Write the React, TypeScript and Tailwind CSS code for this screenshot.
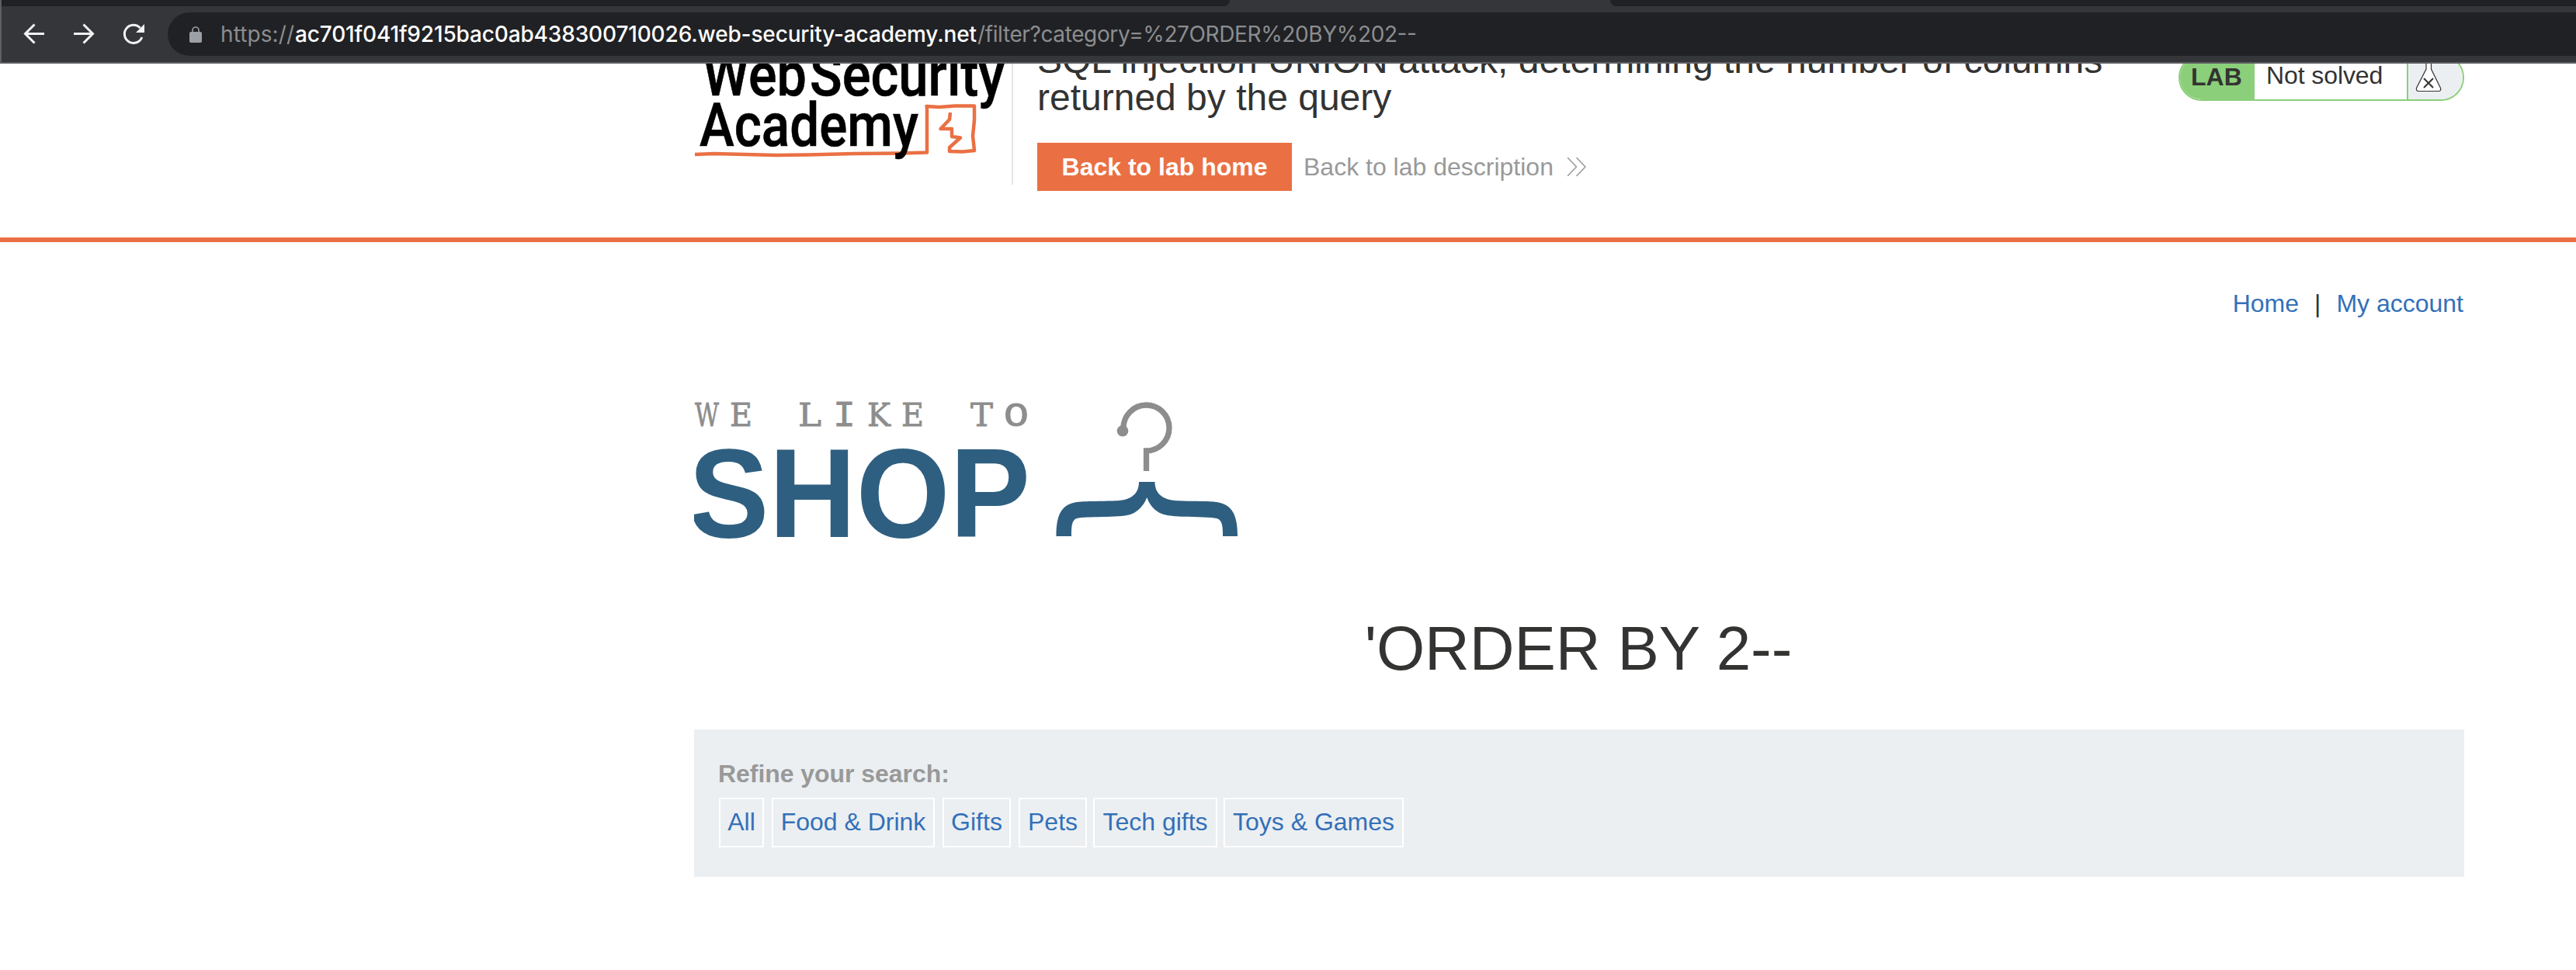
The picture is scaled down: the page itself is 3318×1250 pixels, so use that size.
import React from 'react';

const ARIAL = "font-['Liberation_Sans',Arial,sans-serif]";

function BrowserBar() {
  return (
    <header className="h-[82px] w-full bg-[#35363a] border-b-2 border-[#5f5e63] border-l-2 shrink-0 flex flex-col">
      <div className="flex h-2 justify-between">
        <div className="h-2 w-[1582px] bg-[#202124] rounded-br-lg" />
        <div className="h-2 w-[1244px] bg-[#202124] rounded-bl-lg" />
      </div>
      <div className="mt-2 flex h-14 items-center">
        <svg className="h-14 w-[214px]" viewBox="2 16 214 56" fill="none" stroke="#f1f3f4" strokeWidth="3">
          <path d="M57 43.5H32.500M44.500 31.5L32.500 43.5L44.500 55.5" />
          <path d="M95 43.5H119.500M107.500 31.5L119.500 43.5L107.500 55.5" />
          <path d="M182.800 48A11.600 11.600 0 1 1 180.500 36" />
          <path d="M186 31V42H175Z" fill="#f1f3f4" stroke="none" />
        </svg>
        <div className="flex h-14 flex-1 items-center rounded-l-full bg-[#202124] pl-7">
          <svg className="h-7 w-4 shrink-0" viewBox="0 0 16 28">
            <rect x="0" y="11" width="16" height="14" rx="2" fill="#9aa0a6" />
            <path d="M4 12V9a4 4 0 0 1 8 0V12" fill="none" stroke="#9aa0a6" strokeWidth="1.600" />
          </svg>
          <svg className="ml-[25px] h-14 w-[1560px]" viewBox="285 16 1560 56" fontFamily="Inter, sans-serif" fontSize="28">
            <text x="284" y="54" textLength="95" fill="#8c8d90">https://</text>
            <text x="380" y="54" textLength="878" fill="#ffffff" fontWeight="500">ac701f041f9215bac0ab438300710026.web-security-academy.net</text>
            <text x="1259" y="54" textLength="566" fill="#8c8d90">/filter?category=%27ORDER%20BY%202--</text>
          </svg>
        </div>
      </div>
    </header>
  );
}

function AcademyLogo() {
  return (
    <svg className="block h-[156px] w-[409px] shrink-0" viewBox="894 82 409 156">
      <path d="M895 199L920 198L1000 200L1040 199.500L1100 198L1160 197.500L1194 196.500V139L1193.500 137L1210 138L1230 136.500L1255 136.500L1255 155L1253 175L1255 194L1240 195.500L1223 195L1223 190L1237 177.500L1226 176V166H1211.500L1223 154L1224 145" fill="none" stroke="#ea7044" strokeWidth="4.500" strokeLinejoin="round" />
      <g fontFamily="Roboto, sans-serif" fontWeight="500" fontSize="77" fill="#000" stroke="#000" strokeWidth="0.600">
        <text x="905" y="123" textLength="134" lengthAdjust="spacingAndGlyphs">Web</text>
        <text x="1043" y="123" textLength="251" lengthAdjust="spacingAndGlyphs">Security</text>
        <text x="901" y="188" textLength="282" lengthAdjust="spacingAndGlyphs">Academy</text>
      </g>
    </svg>
  );
}

function LabStatus() {
  return (
    <div className="-mt-3 flex h-[60px] w-[368px] overflow-hidden rounded-[30px] border-2 border-[#8bcf7a] text-[32px] leading-[37px] text-[#333332]">
      <div className="w-24 bg-[#8bcf7a] pl-[14px] pt-[9px] font-bold">LAB</div>
      <div className="w-[196px] pl-[15px] pt-[7px] tracking-[-0.1px]">Not solved</div>
      <div className="flex-1 border-l-2 border-[#8bcf7a] bg-[#ebeff2]">
        <svg className="h-14 w-[70px]" viewBox="3102 72 70 56">
          <path d="M3125 78V89L3112.500 113.500Q3112 117.500 3115 117.500H3141Q3144.500 117.500 3143.500 113.500L3131.500 89V78" fill="#fff" stroke="#333332" strokeWidth="1.200" />
          <path d="M3122 101L3134 113M3134 101L3122 113" stroke="#333332" strokeWidth="2" />
        </svg>
      </div>
    </div>
  );
}

function LabHeader() {
  return (
    <section className="h-[230px] overflow-hidden border-b-[6px] border-[#ea7044]">
      <div className="ml-[894px] flex w-[2280px]">
        <AcademyLogo />
        <div className="h-[156px] w-[2px] bg-[#e5e5e5]" />
        <div className="ml-[31px] flex-1">
          <h2 className="-mt-[28px] text-[48px] leading-[48px] text-[#333332]">
            SQL injection UNION attack, determining the number of columns
            <br />
            returned by the query
          </h2>
          <div className="mt-[34px] flex items-center">
            <a className="flex h-[62px] w-[328px] items-center justify-center bg-[#ea7044] text-[32px] font-bold text-white">Back to lab home</a>
            <a className="ml-[15px] text-[32px] text-[#999]">Back to lab description</a>
            <svg className="ml-[17px] h-6 w-[26px]" viewBox="0 0 26 24" fill="none" stroke="#999" strokeWidth="1.500">
              <path d="M1 0L12.500 12L1 24M12.500 0L24 12L12.500 24" />
            </svg>
          </div>
        </div>
        <LabStatus />
      </div>
    </section>
  );
}

const SLAB = "'DejaVu Serif', serif";
const MONO = "'Liberation Mono', monospace";

const tagline = [
  { c: 'W', x: 895, w: 31, font: SLAB, size: 41 },
  { c: 'E', x: 940, w: 29, font: SLAB, size: 41 },
  { c: 'L', x: 1028, w: 30, font: SLAB, size: 41 },
  { c: 'I', x: 1073, w: 29, font: MONO, size: 46 },
  { c: 'K', x: 1117, w: 30, font: SLAB, size: 41 },
  { c: 'E', x: 1161, w: 29, font: SLAB, size: 41 },
  { c: 'T', x: 1250, w: 29, font: SLAB, size: 41 },
  { c: 'O', x: 1293, w: 32, font: MONO, size: 45 },
];

function ShopLogo() {
  return (
    <svg className="block h-[190px] w-[710px]" viewBox="894 510 710 190">
      <g fill="#8d8d8d" stroke="#8d8d8d" strokeWidth="0.800">
        {tagline.map((l) => (
          <text key={l.x} x={l.x} y="549" fontFamily={l.font} fontSize={l.size} textLength={l.w} lengthAdjust="spacingAndGlyphs">
            {l.c}
          </text>
        ))}
      </g>
      <text x="887" y="692" fontFamily="'Liberation Sans', sans-serif" fontWeight="700" fontSize="163" fill="#2f5f80" textLength="440" lengthAdjust="spacingAndGlyphs">SHOP</text>
      <path d="M1447 552A29.500 29.500 0 1 1 1476.500 581V607" fill="none" stroke="#8d8d8d" strokeWidth="7.300" />
      <circle cx="1446" cy="555.300" r="7.300" fill="#8d8d8d" />
      <path d="M1467 621H1487.500C1487.500 634 1495 643 1513 645C1525 646 1555 645.500 1567 647C1588 650 1594 665 1594 691H1575C1575 680 1575 670 1567 668C1555 665 1515 667.500 1499 663C1492 661 1482 655 1477.300 641C1472 655 1462 661 1456 663C1440 667.500 1400 665 1387 668C1380 670 1380 680 1380 691H1360.500C1360.500 665 1366 650 1387 647C1400 645.500 1430 646 1442 645C1460 643 1467 634 1467 621Z" fill="#2f5f80" />
    </svg>
  );
}

const filters = [
  { label: 'All', box: 'w-[58px] mr-[10px]' },
  { label: 'Food & Drink', box: 'w-[210px] mr-[10px]' },
  { label: 'Gifts', box: 'w-[88px] mr-[10px]' },
  { label: 'Pets', box: 'w-[88px] mr-[8px]' },
  { label: 'Tech gifts', box: 'w-[160px] mr-[8px]' },
  { label: 'Toys & Games', box: 'w-[232px]' },
];

export default function App() {
  return (
    <div className={`flex h-[1250px] w-[3318px] flex-col overflow-hidden bg-white text-[#333332] ${ARIAL}`}>
      <BrowserBar />
      <LabHeader />
      <main className="ml-[894px] w-[2280px]">
        <nav className="mt-[61px] flex h-[37px] justify-end pr-px text-[32px] leading-[37px]">
          <a className="text-[#3470b8]">Home</a>
          <span className="mx-[20px]">|</span>
          <a className="text-[#3470b8]">My account</a>
        </nav>
        <div className="mt-[100px]"><ShopLogo /></div>
        <h1 className="mt-[90px] h-[92px] pr-[2px] text-center text-[80px] leading-[92px] tracking-[-0.1px]">'ORDER BY 2--</h1>
        <section className="mt-[58px] h-[190px] bg-[#ebeff2] px-8 pt-[39px] text-[32px] leading-[37px]">
          <h3 className="-ml-px font-bold tracking-[-0.05px] text-[#999]">Refine your search:</h3>
          <div className="mt-3 flex">
            {filters.map((f) => (
              <a key={f.label} className={`flex h-16 items-center justify-center whitespace-nowrap border-2 border-white pb-[2px] text-[#3470b8] ${f.box}`}>
                {f.label}
              </a>
            ))}
          </div>
        </section>
      </main>
    </div>
  );
}
